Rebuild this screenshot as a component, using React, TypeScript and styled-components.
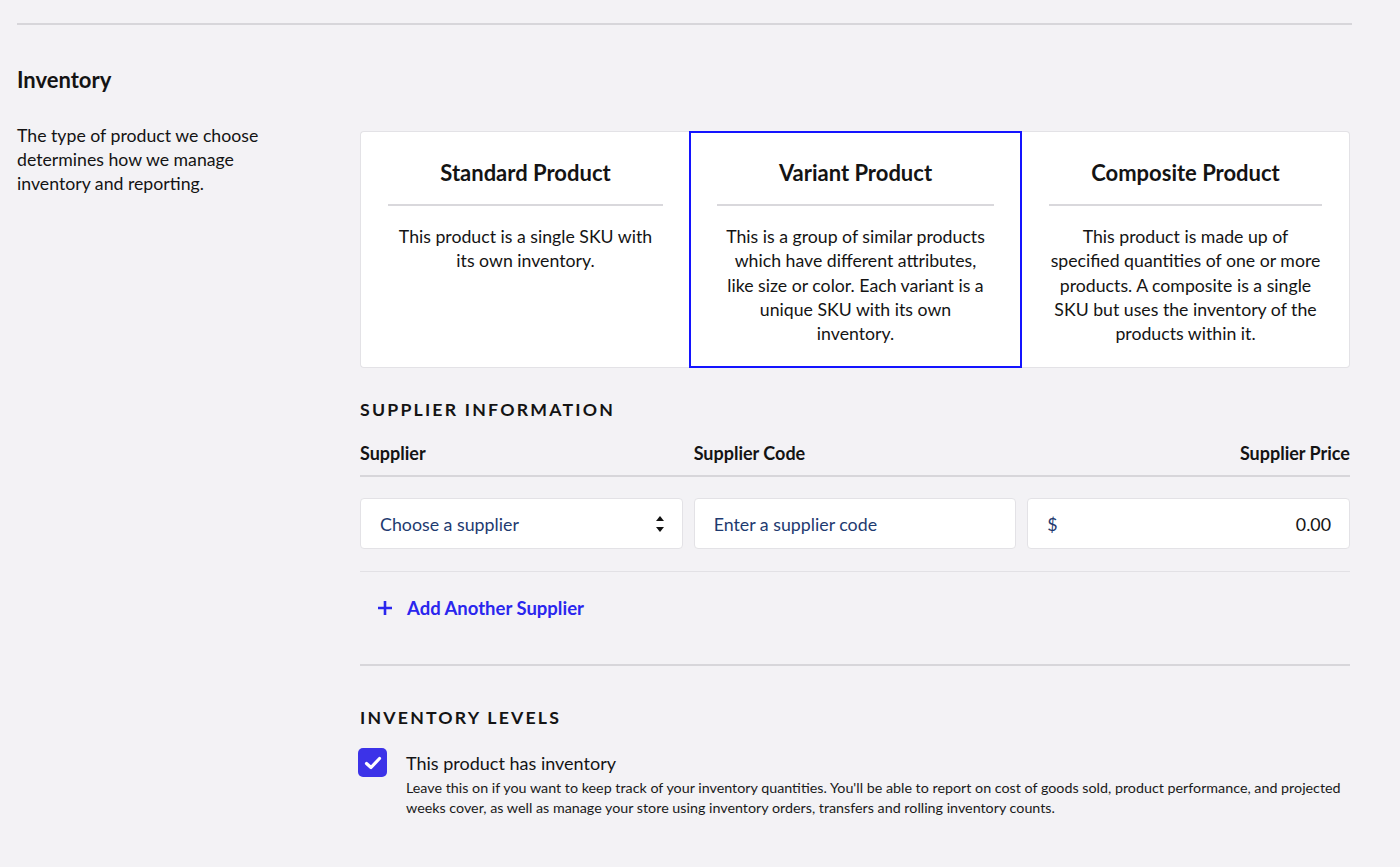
import React, { FC } from 'react'
import styled, { createGlobalStyle, css } from 'styled-components'

const GlobalStyle = createGlobalStyle`
    * { box-sizing: border-box; }
    body {
        margin: 0;
        background: #f3f2f5;
        font-family: Lato, "Open Sans", sans-serif;
        color: #141414;
    }
`

const products = [
    { title: 'Standard Product', text: 'This product is a single SKU with its own inventory.' },
    { title: 'Variant Product', text: 'This is a group of similar products which have different attributes, like size or color. Each variant is a unique SKU with its own inventory.', selected: true },
    { title: 'Composite Product', text: 'This product is made up of specified quantities of one or more products. A composite is a single SKU but uses the inventory of the products within it.' },
]

const App: FC = () => {
    return (
        <>
            <GlobalStyle />
            <Page>
                <TopRule />
                <Heading>Inventory</Heading>
                <Layout>
                    <Description>
                        The type of product we choose determines how we manage inventory and reporting.
                    </Description>
                    <Main>
                        <Cards>
                            {products.map(p => (
                                <Card key={p.title} $selected={!!p.selected}>
                                    <CardTitle>{p.title}</CardTitle>
                                    <CardDivider />
                                    <CardText $narrow={!!p.selected}>{p.text}</CardText>
                                </Card>
                            ))}
                        </Cards>

                        <SectionTitle $top={30}>Supplier Information</SectionTitle>
                        <Columns $header>
                            <ColLabel>Supplier</ColLabel>
                            <ColLabel>Supplier Code</ColLabel>
                            <ColLabel $right>Supplier Price</ColLabel>
                        </Columns>
                        <Columns>
                            <Field>
                                <FieldText>Choose a supplier</FieldText>
                                <Spinner>
                                    <svg width="10" height="24" viewBox="0 0 10 24">
                                        <path d="M1 9 L5 4 L9 9 Z" fill="#111" />
                                        <path d="M1 15 L5 20 L9 15 Z" fill="#111" />
                                    </svg>
                                </Spinner>
                            </Field>
                            <Field>
                                <FieldText>Enter a supplier code</FieldText>
                            </Field>
                            <Field>
                                <FieldText>$</FieldText>
                                <PriceValue>0.00</PriceValue>
                            </Field>
                        </Columns>
                        <LightRule />
                        <AddLink>
                            <svg width="16" height="16" viewBox="0 0 16 16">
                                <path d="M8 1 V15 M1 8 H15" stroke="#2a26ee" strokeWidth="2.6" />
                            </svg>
                            Add Another Supplier
                        </AddLink>
                        <DarkRule />

                        <SectionTitle $top={40}>Inventory Levels</SectionTitle>
                        <CheckRow>
                            <CheckBox>
                                <svg width="18" height="14" viewBox="0 0 18 14">
                                    <path d="M2.5 7.5 L7 11.5 L15.5 2.5" stroke="#fff" strokeWidth="3.2" fill="none" strokeLinecap="round" strokeLinejoin="round" />
                                </svg>
                            </CheckBox>
                            <CheckBody>
                                <CheckLabel>This product has inventory</CheckLabel>
                                <CheckHelp>
                                    Leave this on if you want to keep track of your inventory quantities. You'll be able to report on cost of goods sold, product performance, and projected weeks cover, as well as manage your store using inventory orders, transfers and rolling inventory counts.
                                </CheckHelp>
                            </CheckBody>
                        </CheckRow>
                    </Main>
                </Layout>
            </Page>
        </>
    )
}

export default App

const Page = styled.div`
    padding: 23px 50px 40px 17px;
`
const TopRule = styled.div`
    height: 2px;
    background: #d7d6da;
    margin-right: -2px;
`
const Heading = styled.h2`
    margin: 43px 0 0;
    font-size: 22px;
    line-height: 24px;
    font-weight: 700;
`
const Layout = styled.div`
    display: grid;
    grid-template-columns: 343px 1fr;
    margin-top: 32px;
`
const Description = styled.p`
    margin: 0;
    font-size: 17.7px;
    line-height: 24px;
    width: 270px;
`
const Main = styled.div`
    padding-top: 7px;
`
const Cards = styled.div`
    display: grid;
    grid-template-columns: 330px 332px 1fr;
`
const Card = styled.div<{ $selected: boolean }>`
    background: #fff;
    padding: 27px 27px 21px;
    text-align: center;
    border: 1px solid #e3e2e6;
    ${({ $selected }) => $selected ? css`
        border: 2px solid #1414ff;
        padding: 26px 26px 20px;
        margin-left: -1px;
        position: relative;
    ` : css`
        &:first-child { border-radius: 4px 0 0 4px; border-right: none; }
        &:last-child { border-radius: 0 4px 4px 0; border-left: none; }
    `}
`
const CardTitle = styled.div`
    font-size: 22px;
    line-height: 28px;
    font-weight: 700;
`
const CardDivider = styled.div`
    height: 2px;
    background: #d9d8dc;
    margin-top: 17px;
`
const CardText = styled.p<{ $narrow: boolean }>`
    margin: 19px 0 0;
    padding: 0 ${({ $narrow }) => $narrow ? '3px' : '0'};
    font-size: 17.7px;
    line-height: 24.25px;
`
const SectionTitle = styled.h3<{ $top: number }>`
    margin: ${({ $top }) => $top}px 0 0;
    font-size: 17.7px;
    line-height: 24px;
    font-weight: 700;
    letter-spacing: 2.2px;
    text-transform: uppercase;
`
const Columns = styled.div<{ $header?: boolean }>`
    display: grid;
    grid-template-columns: repeat(3, 1fr);
    column-gap: 11px;
    ${({ $header }) => $header ? css`
        margin-top: 19px;
        padding-bottom: 10px;
        border-bottom: 2px solid #d7d6da;
    ` : css`
        margin-top: 21px;
    `}
`
const ColLabel = styled.div<{ $right?: boolean }>`
    font-size: 18px;
    line-height: 24px;
    font-weight: 700;
    text-align: ${({ $right }) => $right ? 'right' : 'left'};
`
const Field = styled.div`
    height: 51px;
    background: #fff;
    border: 1px solid #e3e2e6;
    border-radius: 4px;
    display: flex;
    align-items: center;
    justify-content: space-between;
    padding: 0 18px 0 19px;
`
const FieldText = styled.span`
    font-size: 17.8px;
    color: #1e3a70;
`
const PriceValue = styled.span`
    font-size: 17.8px;
    color: #141414;
`
const Spinner = styled.span`
    display: flex;
    margin-right: -1px;
`
const LightRule = styled.div`
    height: 1px;
    background: #e2e1e5;
    margin-top: 22px;
`
const AddLink = styled.div`
    display: flex;
    align-items: center;
    gap: 14px;
    margin-top: 24px;
    padding-left: 17px;
    font-size: 18.5px;
    line-height: 24px;
    font-weight: 700;
    color: #2a26ee;
`
const DarkRule = styled.div`
    height: 2px;
    background: #d7d6da;
    margin-top: 44px;
`
const CheckRow = styled.div`
    display: flex;
    gap: 19px;
    margin-top: 18px;
    margin-left: -2px;
`
const CheckBox = styled.div`
    width: 29px;
    height: 29px;
    flex-shrink: 0;
    border-radius: 5px;
    background: #3c33e8;
    display: flex;
    align-items: center;
    justify-content: center;
`
const CheckBody = styled.div`
    padding-top: 3px;
`
const CheckLabel = styled.div`
    font-size: 18px;
    line-height: 24px;
`
const CheckHelp = styled.p`
    margin: 3px 0 0;
    font-size: 14.3px;
    line-height: 20px;
    color: #1a1a1a;
`
